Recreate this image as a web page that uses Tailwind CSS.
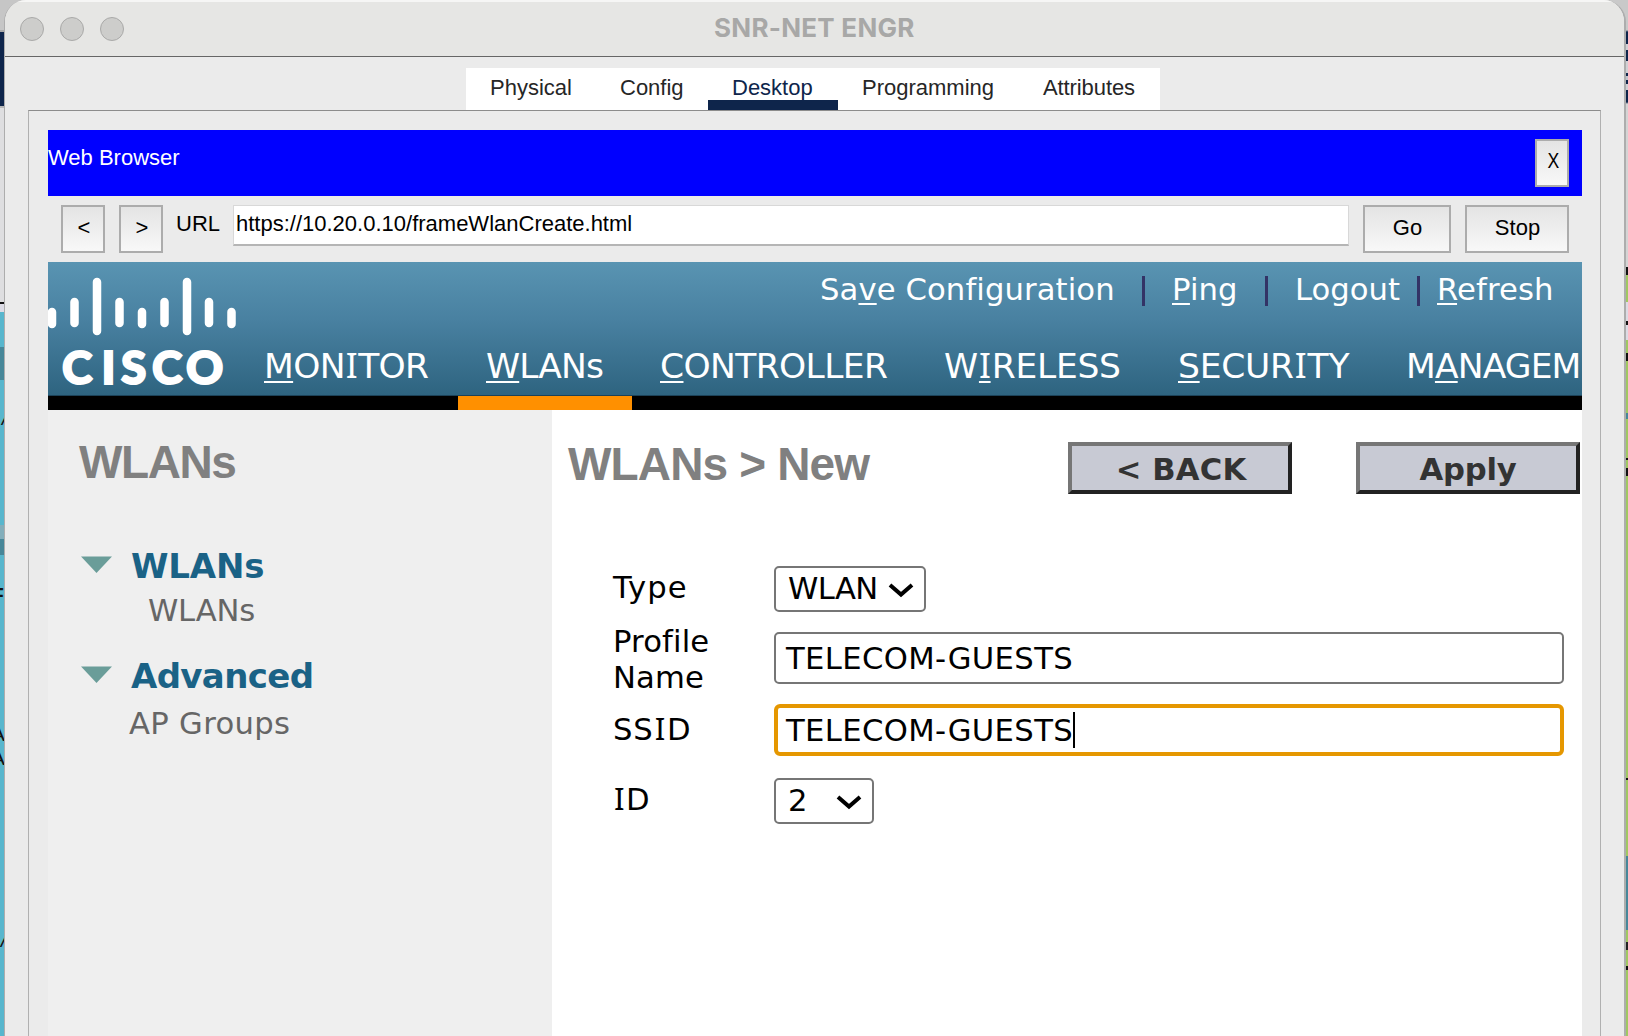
<!DOCTYPE html>
<html lang="en">
<head>
<meta charset="utf-8">
<title>SNR-NET ENGR</title>
<script src="https://cdn.jsdelivr.net/npm/@tailwindcss/browser@4"></script>
</head>
<body class="w-[1628px] h-[1036px] overflow-hidden relative bg-[#d4d4d6] font-['Liberation_Sans',sans-serif] text-[22px] text-black whitespace-nowrap">
<!-- desktop edges behind the window -->
<div class="absolute left-0 top-0 w-[26px] h-[1036px] bg-[linear-gradient(#c6c6c6_0_30px,#a9a9a9_30px_32px,#0e254b_32px_106px,#b8b8b8_106px_108px,#dedee0_108px_302px,#111_302px_304px,#dddce6_304px_312px,#58b6cd_312px_347px,#478799_347px_380px,#58b6cd_380px_525px,#82aebb_525px_539px,#478799_539px_555px,#58b6cd_555px)] overflow-hidden"></div>
<div class="absolute left-0 top-0 w-[4px] h-[1036px] overflow-hidden text-[21px] leading-[20px] text-[#111]">
<span class="absolute left-[2px] top-[408px] italic">/</span><span class="absolute left-[-9px] top-[585px] font-bold">F</span><span class="absolute left-[-9px] top-[724px]">A</span><span class="absolute left-[-9px] top-[748px]">A</span><span class="absolute left-[1px] top-[930px] italic">/</span>
</div>
<div class="absolute left-[1602px] top-0 w-[26px] h-[1036px] bg-[linear-gradient(#c9c9c9_0_30px,#0e254b_32px_44px,#d0d0d4_44px_50px,#0e254b_50px_61px,#d0d0d4_61px_73px,#0e254b_73px_76px,#c0c4cc_76px_80px,#0e254b_80px_84px,#d0d0d4_84px_90px,#0e254b_90px_102px,#d4d4d4_104px_267px,#111_267px_275px,#a0c862_275px_302px,#dcdbe4_302px_321px,#111_321px_325px,#dcdbe4_325px_340px,#a0c862_340px_353px,#111_353px_361px,#a0c862_361px_413px,#478799_413px_419px,#a0c862_419px_458px,#111_458px_460px,#a0c862_460px_468px,#111_468px_476px,#a0c862_476px_778px,#111_778px_780px,#a0c862_780px_856px,#478799_856px_930px,#a0c862_930px_942px,#222_942px_950px,#a0c862_950px_966px,#111_966px_970px,#a0c862_970px)]"></div>

<main class="relative ml-[4px] w-[1622px] h-[1036px] rounded-t-[22px] bg-[#ebebeb] border-l border-r-[2px] border-[#adadad] overflow-hidden flex flex-col">
  <header class="h-[57px] shrink-0 bg-[#e6e6e4] border-b border-[#666] border-t-2 border-t-[#f6f6f5] flex items-center">
    <div class="flex gap-[16px] pl-[15px]">
      <i class="size-[24px] rounded-full bg-[#cdcdcb] border border-[#a9a9a8]"></i>
      <i class="size-[24px] rounded-full bg-[#cdcdcb] border border-[#a9a9a8]"></i>
      <i class="size-[24px] rounded-full bg-[#cdcdcb] border border-[#a9a9a8]"></i>
    </div>
    <h1 class="flex-1 pl-[590px] pb-[4px] font-['Inter',sans-serif] font-bold text-[26px] tracking-[0.27px] text-[#a8a8a7]">SNR-NET ENGR</h1>
  </header>

  <nav class="mt-[11px] ml-[461px] w-[694px] h-[42px] shrink-0 bg-white flex leading-[39px] text-[#262626]">
    <div class="w-[130px] pl-[24px]">Physical</div>
    <div class="w-[112px] pl-[24px]">Config</div>
    <div class="w-[130px] h-[42px] pl-[24px] text-[#0e254b] border-b-[10px] border-[#0e254b]">Desktop</div>
    <div class="w-[180px] pl-[24px]">Programming</div>
    <div class="pl-[25px] tracking-[-0.1px]">Attributes</div>
  </nav>

  <section class="ml-[23px] w-[1573px] flex-1 border border-b-0 border-[#b0b0b0] border-t-[#8c8c8c] pl-[19px] pt-[19px] flex flex-col">
    <div class="w-[1534px] h-[66px] shrink-0 bg-[#0000ff] text-white flex justify-between pr-[13px]">
      <span class="leading-[56px]">Web Browser</span>
      <button class="mt-[9px] w-[34px] h-[48px] border-2 border-[#acacac] bg-linear-to-b from-[#e4e4e4] to-[#f8f8f8] text-black leading-[40px] flex justify-center pl-[2px]"><span class="scale-x-80">X</span></button>
    </div>
    <div class="w-[1534px] h-[66px] shrink-0 flex pt-[9px] pl-[13px] leading-[42px]">
      <button class="w-[44px] h-[48px] pl-[2px] pb-[2px] border-2 border-[#acacac] bg-linear-to-b from-[#e4e4e4] to-[#f8f8f8]">&lt;</button>
      <button class="ml-[14px] w-[44px] h-[48px] pl-[2px] pb-[2px] border-2 border-[#acacac] bg-linear-to-b from-[#e4e4e4] to-[#f8f8f8]">&gt;</button>
      <span class="ml-[13px] w-[57px] leading-[37px]">URL</span>
      <div class="w-[1116px] h-[41px] bg-white border border-[#d8d8d8] border-b-2 border-b-[#b5b5b5] pl-[2px] leading-[35px]">https://10.20.0.10/frameWlanCreate.html</div>
      <button class="ml-[14px] w-[88px] h-[48px] pl-px pb-1 border-2 border-[#acacac] bg-linear-to-b from-[#e4e4e4] to-[#f8f8f8]">Go</button>
      <button class="ml-[14px] w-[104px] h-[48px] pl-px pb-1 border-2 border-[#acacac] bg-linear-to-b from-[#e4e4e4] to-[#f8f8f8]">Stop</button>
    </div>

    <div class="w-[1534px] flex-1 bg-white font-['DejaVu_Sans',sans-serif] flex flex-col">
      <div class="h-[134px] shrink-0 flex overflow-hidden text-white border-b border-[#1c4258] bg-linear-to-b from-[#5994b2] via-[#4880a0] via-45% to-[#2e6480]">
        <svg class="shrink-0" width="188" height="134" viewBox="48 262 188 134">
          <g stroke="#fff" stroke-width="8.5" stroke-linecap="round">
            <path d="M52 312V324M74.5 302V323M97 282V331M119.5 302V323M142 312V324M164.5 302V323M187 282V331M209 302V323M231.500 312V324"/>
          </g>
          <text x="62 101.500 121 152 186" y="383.500" font-family="Lato, sans-serif" font-weight="900" font-size="46" fill="#fff" stroke="#fff" stroke-width="2">CISCO</text>
        </svg>
        <div class="flex flex-col">
          <div class="flex h-[55px] leading-[55px] pl-[584px] text-[30.67px]">
            <div class="w-[322px] tracking-[0.1px]">Sa<u class="decoration-2 underline-offset-[3px]">v</u>e Configuration</div>
            <i class="w-[3px] h-[30px] mt-[14px] bg-[#333366]"></i>
            <div class="w-[120px] pl-[27px] tracking-[0.1px]"><u class="decoration-2 underline-offset-[3px]">P</u>ing</div>
            <i class="w-[3px] h-[30px] mt-[14px] bg-[#333366]"></i>
            <div class="w-[149px] pl-[27px]">Logout</div>
            <i class="w-[3px] h-[30px] mt-[14px] bg-[#333366]"></i>
            <div class="pl-[17px] tracking-[0.12px]"><u class="decoration-2 underline-offset-[3px]">R</u>efresh</div>
          </div>
          <div class="flex h-[60px] mt-[19px] leading-[60px] pl-[28px] text-[34.5px]">
            <div class="w-[222px] tracking-[-0.65px]"><u class="decoration-2 underline-offset-[3px]">M</u>ON<span class="font-['Noto_Sans'] text-[1.02em] leading-none px-[0.03em]">I</span>TOR</div>
            <div class="w-[174px] tracking-[-0.9px]"><u class="decoration-2 underline-offset-[3px]">W</u>LANs</div>
            <div class="w-[284px] tracking-[-0.62px]"><u class="decoration-2 underline-offset-[3px]">C</u>ONTROLLER</div>
            <div class="w-[234px] tracking-[-0.25px]">W<u class="decoration-2 underline-offset-[3px]"><span class="font-['Noto_Sans'] text-[1.02em] leading-none px-[0.03em]">I</span></u>RELESS</div>
            <div class="w-[228px] tracking-[-0.25px]"><u class="decoration-2 underline-offset-[3px]">S</u>ECUR<span class="font-['Noto_Sans'] text-[1.02em] leading-none px-[0.03em]">I</span>TY</div>
            <div class="tracking-[-0.85px]">M<u class="decoration-2 underline-offset-[3px]">A</u>NAGEM</div>
          </div>
        </div>
      </div>
      <div class="h-[14px] shrink-0 bg-black pl-[410px]"><div class="w-[174px] h-full bg-[#ff9000]"></div></div>

      <div class="flex flex-1">
        <aside class="w-[504px] bg-[#efefef] pl-[30px] pt-[25px]">
          <h2 class="pl-px font-['Liberation_Sans',sans-serif] font-bold text-[46px] tracking-[-1.4px] leading-[54px] text-[#808080]">WLANs</h2>
          <div class="flex mt-[55px] h-[44px] leading-[44px] font-bold text-[34px] tracking-[-0.2px] text-[#1a6286] pl-[3px]">
            <svg class="mt-[12px]" width="50" height="18" viewBox="0 0 50 18"><path d="M0 .5H31L15.500 17Z" fill="#6a9d99"/></svg><span>WLANs</span>
          </div>
          <div class="h-[46px] leading-[46px] pl-[70px] text-[30.67px] tracking-[-0.2px] text-[#666]">WLANs</div>
          <div class="flex mt-[20px] h-[44px] leading-[44px] font-bold text-[34px] tracking-[-0.65px] text-[#1a6286] pl-[3px]">
            <svg class="mt-[12px]" width="50" height="18" viewBox="0 0 50 18"><path d="M0 .5H31L15.500 17Z" fill="#6a9d99"/></svg><span>Advanced</span>
          </div>
          <div class="h-[46px] mt-[3px] leading-[46px] pl-[51px] text-[30.67px] tracking-[0.3px] text-[#666]">AP Groups</div>
        </aside>
        <div class="flex-1 pl-[16px]">
          <div class="flex pt-[27px]">
            <h2 class="w-[500px] font-['Liberation_Sans',sans-serif] font-bold text-[46px] tracking-[-0.85px] leading-[54px] text-[#808080]">WLANs &gt; New</h2>
            <button class="mt-[5px] w-[224px] h-[52px] border-4 border-t-[#767676] border-l-[#767676] border-r-[#222] border-b-[#222] bg-[#c8cad4] text-[#333] font-bold text-[30.67px] leading-[47px] tracking-[0.15px] pl-[2px] flex justify-center">&lt; BACK</button>
            <button class="mt-[5px] ml-[64px] w-[224px] h-[52px] border-4 border-t-[#767676] border-l-[#767676] border-r-[#222] border-b-[#222] bg-[#c8cad4] text-[#333] font-bold text-[30.67px] leading-[47px] tracking-[-0.2px] flex justify-center">Apply</button>
          </div>
          <form class="mt-[72px] pl-[44px] text-[30.67px] grid grid-cols-[162px_790px]">
            <label class="pl-px h-[60px] leading-[43px] tracking-[1.1px]">Type</label>
            <div class="w-[152px] h-[46px] border-2 border-[#767676] rounded-[5px] flex pl-[12px] leading-[42px] tracking-[-0.6px]">WLAN
              <svg class="ml-auto mr-[9px] mt-[14px]" width="28" height="16" viewBox="0 0 28 16" fill="none" stroke="#000" stroke-width="4"><path d="M3 3L14 12.500L25 3"/></svg>
            </div>
            <label class="pl-px h-[78px] leading-[36px] tracking-[0.15px]"><span class="block -mt-[2px]">Profile<br>Name</span></label>
            <div class="mt-[6px] h-[52px] border-2 border-[#767676] rounded-[5px] pl-[10px] leading-[50px] tracking-[0.37px]">TELECOM-GUESTS</div>
            <label class="pl-px h-[74px] leading-[51px] tracking-[0.9px]">SS<span class="font-['Noto_Sans'] text-[1.02em] leading-none px-[0.03em]">I</span>D</label>
            <div class="h-[52px] border-4 border-[#e59700] rounded-[6px] pl-[8px] leading-[46px] tracking-[0.37px] flex">TELECOM-GUESTS<i class="mt-[4px] w-[2px] h-[36px] bg-black"></i></div>
            <label class="pl-px leading-[43px] tracking-[0.6px]"><span class="font-['Noto_Sans'] text-[1.02em] leading-none px-[0.03em]">I</span>D</label>
            <div class="w-[100px] h-[46px] border-2 border-[#767676] rounded-[5px] flex pl-[12px] leading-[42px]">2
              <svg class="ml-auto mr-[9px] mt-[14px]" width="28" height="16" viewBox="0 0 28 16" fill="none" stroke="#000" stroke-width="4"><path d="M3 3L14 12.500L25 3"/></svg>
            </div>
          </form>
        </div>
      </div>
    </div>
  </section>
</main>
</body>
</html>
